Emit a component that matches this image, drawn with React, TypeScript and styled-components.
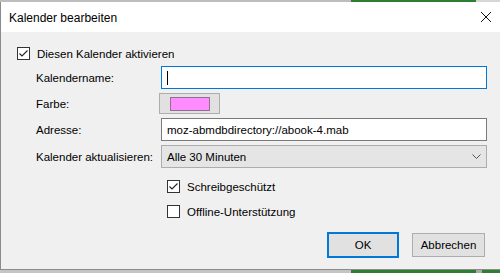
import React from "react"
import styled, { createGlobalStyle } from "styled-components"

const GlobalStyle = createGlobalStyle`
  html, body {
    margin: 0;
    padding: 0;
    overflow: hidden;
  }
  body {
    font-family: "Segoe UI", "Liberation Sans", Arial, sans-serif;
    font-size: 11.5px;
    color: #000;
  }
`

const Screen = styled.div`
  width: 500px;
  height: 273px;
  display: flex;
  flex-direction: column;
  background: #d4d4d4;
`

const Strip = styled.div<{ height: number }>`
  height: ${p => p.height}px;
  display: flex;
  flex: none;
  background: #c9c9c9;
`

const StripPart = styled.div<{ width: number; color: string }>`
  width: ${p => p.width}px;
  background: ${p => p.color};
  flex: none;
`

const Dialog = styled.div`
  flex: 1;
  display: flex;
  flex-direction: column;
  border-left: 1px solid #8c8c8c;
  border-bottom: 1px solid #8c8c8c;
  background: #f0f0f0;
`

const TitleBar = styled.div`
  height: 30px;
  background: #fff;
  display: flex;
  align-items: center;
  justify-content: space-between;
  padding: 0 8px 0 8px;
  flex: none;
`

const Title = styled.span`
  font-size: 12px;
  margin-top: 1px;
`

const Body = styled.div`
  flex: 1;
  display: flex;
  flex-direction: column;
  padding: 15px 12px 0 16px;
`

const CheckRow = styled.label<{ indent?: number }>`
  display: flex;
  align-items: center;
  gap: 7px;
  height: 13px;
  margin-left: ${p => p.indent ?? 0}px;
`

const Box = styled.span`
  width: 11px;
  height: 11px;
  border: 1px solid #333;
  background: #fff;
  display: flex;
  align-items: center;
  justify-content: center;
  flex: none;
`

const FormGrid = styled.div`
  display: grid;
  grid-template-columns: 126px 326px;
  grid-template-rows: 23px 21px 23px 23px;
  row-gap: 4px;
  margin: 6px 0 0 18px;
  align-items: center;
`

const Label = styled.span`
  padding-left: 1px;
`

const TextInput = styled.div<{ focused?: boolean }>`
  height: 100%;
  box-sizing: border-box;
  border: 1px solid ${p => (p.focused ? "#0078d7" : "#7a7a7a")};
  background: #fff;
  display: flex;
  align-items: center;
  padding-left: 5px;
`

const Caret = styled.span`
  width: 1px;
  height: 14px;
  background: #000;
`

const ColorButton = styled.div`
  width: 61px;
  height: 100%;
  box-sizing: border-box;
  margin-left: -2px;
  background: #e1e1e1;
  border: 1px solid #adadad;
  display: flex;
  align-items: center;
  justify-content: center;
`

const Swatch = styled.span<{ color: string }>`
  width: 38px;
  height: 12px;
  background: ${p => p.color};
  border: 1px solid #8f7090;
`

const Select = styled.div`
  height: 100%;
  box-sizing: border-box;
  background: #e5e5e5;
  border: 1px solid #adadad;
  display: flex;
  align-items: center;
  justify-content: space-between;
  padding: 0 5px 0 5px;
`

const Checks = styled.div`
  display: flex;
  flex-direction: column;
  gap: 12px;
  margin-top: 12px;
`

const ButtonRow = styled.div`
  display: flex;
  justify-content: flex-end;
  align-items: center;
  gap: 13px;
  margin-top: 14px;
  padding-right: 3px;
`

const Button = styled.button<{ primary?: boolean }>`
  font: inherit;
  color: #000;
  width: ${p => (p.primary ? 72 : 73)}px;
  height: ${p => (p.primary ? 26 : 24)}px;
  background: #e1e1e1;
  border: ${p => (p.primary ? "2px solid #0078d7" : "1px solid #adadad")};
  padding: 0;
`

const Check = () => (
  <svg width="11" height="11" viewBox="0 0 11 11">
    <polyline points="1.5,5.5 4,8 9.5,2.5" fill="none" stroke="#222" strokeWidth="1.1" />
  </svg>
)

const CloseIcon = () => (
  <svg width="12" height="12" viewBox="0 0 12 12">
    <path d="M1 1 L11 11 M11 1 L1 11" stroke="#111" strokeWidth="1" />
  </svg>
)

const Chevron = () => (
  <svg width="9" height="6" viewBox="0 0 9 6">
    <polyline points="0.5,0.5 4.5,4.5 8.5,0.5" fill="none" stroke="#555" strokeWidth="1" />
  </svg>
)

export default function App() {
  return (
    <Screen>
      <GlobalStyle />
      <Strip height={2}>
        <StripPart width={351} color="#bdbdbd" />
        <StripPart width={125} color="#2f7d32" />
        <StripPart width={24} color="#d6d6d6" />
      </Strip>
      <Dialog>
        <TitleBar>
          <Title>Kalender bearbeiten</Title>
          <CloseIcon />
        </TitleBar>
        <Body>
          <CheckRow>
            <Box>
              <Check />
            </Box>
            Diesen Kalender aktivieren
          </CheckRow>
          <FormGrid>
            <Label>Kalendername:</Label>
            <TextInput focused>
              <Caret />
            </TextInput>
            <Label>Farbe:</Label>
            <ColorButton>
              <Swatch color="#ff8cff" />
            </ColorButton>
            <Label>Adresse:</Label>
            <TextInput>moz-abmdbdirectory://abook-4.mab</TextInput>
            <Label>Kalender aktualisieren:</Label>
            <Select>
              Alle 30 Minuten
              <Chevron />
            </Select>
          </FormGrid>
          <Checks>
            <CheckRow indent={150}>
              <Box>
                <Check />
              </Box>
              Schreibgeschützt
            </CheckRow>
            <CheckRow indent={150}>
              <Box />
              Offline-Unterstützung
            </CheckRow>
          </Checks>
          <ButtonRow>
            <Button primary>OK</Button>
            <Button>Abbrechen</Button>
          </ButtonRow>
        </Body>
      </Dialog>
      <Strip height={3}>
        <StripPart width={351} color="#c4c4c4" />
        <StripPart width={125} color="#2f7d32" />
        <StripPart width={6} color="#a8a8a8" />
        <StripPart width={18} color="#2f7d32" />
      </Strip>
    </Screen>
  )
}
